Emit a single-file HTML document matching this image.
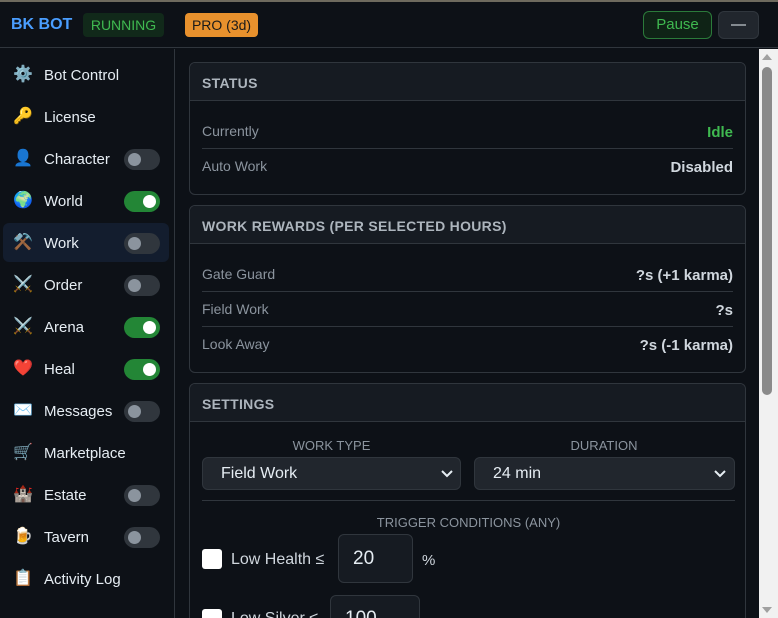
<!DOCTYPE html>
<html style="height:618px;overflow:hidden"><head><style>
*{box-sizing:border-box;margin:0;padding:0}
body{width:778px;height:618px;overflow:hidden;background:#0d1117;font-family:"Liberation Sans",sans-serif;color:#e6edf3;position:relative}
.hdr{position:absolute;left:0;top:0;width:778px;height:48px;border-bottom:1px solid #30363d;background:#0d1117}
.abs{position:absolute}
.side{position:absolute;left:0;top:49px;width:175px;height:569px;border-right:1px solid #30363d}
.nav{position:absolute;left:3px;width:166px;height:39px;border-radius:6px;font-size:15px;color:#e6edf3}
.nav .ic{position:absolute;left:10px;top:10px;width:20px;height:20px;font-size:16px;line-height:20px;text-align:center}
.nav .t{position:absolute;left:41px;top:12px}
.tg{position:absolute;left:121px;top:10px;width:36px;height:21px;border-radius:11px;background:#30363d}
.tg::after{content:"";position:absolute;left:4px;top:4px;width:13px;height:13px;border-radius:50%;background:#8b949e}
.tg.on{background:#238636}.tg.on::after{left:19px;background:#fff}
.card{position:absolute;left:189px;width:557px;border:1px solid #30363d;border-radius:6px;background:#0d1117;overflow:hidden}
.ch{height:38px;background:#161b22;border-bottom:1px solid #30363d;font-size:14px;font-weight:bold;color:#adb5bd;padding:12px 0 0 12px;letter-spacing:.3px}
.row{position:absolute;left:12px;right:12px;height:35px;font-size:14px;color:#8b949e}
.row .l{position:absolute;left:0;top:9px}
.row .r{position:absolute;right:0;top:10px;font-weight:bold;color:#d0d7de;font-size:15px}
.sel{position:absolute;height:33px;background:#21262d;border:1px solid #30363d;border-radius:6px;font-size:16px;color:#e6edf3}
.lbl{position:absolute;font-size:13px;color:#8b949e;text-align:center}
</style></head><body>
<div class="hdr">
<div class="abs" style="left:0;top:0;width:778px;height:2px;background:#6e6a5e"></div>
<div class="abs" style="left:11px;top:16px;font-size:16px;font-weight:bold;color:#4a9eff">BK BOT</div>
<div class="abs" style="left:83px;top:13px;width:81px;height:24px;border-radius:4px;background:#11291a;color:#3fb950;font-size:14px;text-align:center;line-height:24px">RUNNING</div>
<div class="abs" style="left:185px;top:13px;width:73px;height:24px;border-radius:4px;background:#e8912d;color:#1a1a1a;font-size:14px;text-align:center;line-height:24px">PRO (3d)</div>
<div class="abs" style="left:643px;top:11px;width:69px;height:28px;border:1px solid #2b7a3a;border-radius:6px;background:#0f2316;color:#3fb950;font-size:15px;text-align:center;line-height:26px">Pause</div>
<div class="abs" style="left:718px;top:11px;width:41px;height:28px;border:1px solid #30363d;border-radius:6px;background:#21262d;color:#e6edf3;font-size:15px;text-align:center;line-height:26px">—</div>
</div>
<div class="side">
<div class="nav" style="top:6px"><span class="ic">⚙️</span><span class="t">Bot Control</span></div>
<div class="nav" style="top:48px"><span class="ic">🔑</span><span class="t">License</span></div>
<div class="nav" style="top:90px"><span class="ic">👤</span><span class="t">Character</span><span class="tg"></span></div>
<div class="nav" style="top:132px"><span class="ic">🌍</span><span class="t">World</span><span class="tg on"></span></div>
<div class="nav" style="top:174px;background:#131d2e"><span class="ic">⚒️</span><span class="t">Work</span><span class="tg"></span></div>
<div class="nav" style="top:216px"><span class="ic">⚔️</span><span class="t">Order</span><span class="tg"></span></div>
<div class="nav" style="top:258px"><span class="ic">⚔️</span><span class="t">Arena</span><span class="tg on"></span></div>
<div class="nav" style="top:300px"><span class="ic" style="color:#f0506e">❤️</span><span class="t">Heal</span><span class="tg on"></span></div>
<div class="nav" style="top:342px"><span class="ic">✉️</span><span class="t">Messages</span><span class="tg"></span></div>
<div class="nav" style="top:384px"><span class="ic">🛒</span><span class="t">Marketplace</span></div>
<div class="nav" style="top:426px"><span class="ic">🏰</span><span class="t">Estate</span><span class="tg"></span></div>
<div class="nav" style="top:468px"><span class="ic">🍺</span><span class="t">Tavern</span><span class="tg"></span></div>
<div class="nav" style="top:510px"><span class="ic">📋</span><span class="t">Activity Log</span></div>
</div>

<div class="card" style="top:62px;height:133px"><div class="ch">STATUS</div>
<div class="row" style="top:51px;border-bottom:1px solid #30363d"><span class="l">Currently</span><span class="r" style="color:#3fb950">Idle</span></div>
<div class="row" style="top:86px"><span class="l">Auto Work</span><span class="r">Disabled</span></div>
</div>
<div class="card" style="top:205px;height:168px"><div class="ch">WORK REWARDS (PER SELECTED HOURS)</div>
<div class="row" style="top:51px;border-bottom:1px solid #30363d"><span class="l">Gate Guard</span><span class="r">?s (+1 karma)</span></div>
<div class="row" style="top:86px;border-bottom:1px solid #30363d"><span class="l">Field Work</span><span class="r">?s</span></div>
<div class="row" style="top:121px"><span class="l">Look Away</span><span class="r">?s (-1 karma)</span></div>
</div>
<div class="card" style="top:383px;height:235px;border-bottom:none;border-radius:6px 6px 0 0"><div class="ch">SETTINGS</div>
<div class="lbl" style="left:12px;width:259px;top:54px">WORK TYPE</div>
<div class="lbl" style="left:284px;width:260px;top:54px">DURATION</div>
<div class="sel" style="left:12px;top:73px;width:259px"><span class="abs" style="left:18px;top:7px">Field Work</span><svg class="abs" style="left:237px;top:11px" width="14" height="10"><path d="M2 2l5 5 5-5" stroke="#e6edf3" stroke-width="2" fill="none"/></svg></div>
<div class="sel" style="left:284px;top:73px;width:261px"><span class="abs" style="left:18px;top:7px">24 min</span><svg class="abs" style="left:238px;top:11px" width="14" height="10"><path d="M2 2l5 5 5-5" stroke="#e6edf3" stroke-width="2" fill="none"/></svg></div>
<div class="abs" style="left:12px;top:116px;width:533px;height:1px;background:#30363d"></div>
<div class="lbl" style="left:12px;width:533px;top:131px">TRIGGER CONDITIONS (ANY)</div>
<div class="abs" style="left:12px;top:165px;width:20px;height:20px;background:#fff;border-radius:3px"></div>
<div class="abs" style="left:41px;top:167px;font-size:16px;color:#d0d7de">Low Health ≤</div>
<div class="abs" style="left:148px;top:150px;width:75px;height:49px;background:#161b22;border:1px solid #30363d;border-radius:6px;font-size:19px;padding:13px 0 0 14px">20</div>
<div class="abs" style="left:232px;top:168px;font-size:15px;color:#d0d7de">%</div>
<div class="abs" style="left:12px;top:225px;width:20px;height:20px;background:#fff;border-radius:3px"></div>
<div class="abs" style="left:41px;top:226px;font-size:16px;color:#d0d7de">Low Silver ≤</div>
<div class="abs" style="left:140px;top:211px;width:90px;height:49px;background:#161b22;border:1px solid #30363d;border-radius:6px;font-size:19px;padding:12px 0 0 14px">100</div>
</div>

<div class="abs" style="left:759px;top:49px;width:19px;height:569px;background:#f1f1f1"></div>
<div class="abs" style="left:762px;top:67px;width:10px;height:328px;background:#8a8a8a;border-radius:5px"></div>
<svg class="abs" style="left:762px;top:53px" width="10" height="8"><path d="M0 7L5 1 10 7z" fill="#a0a0a0"/></svg>
<svg class="abs" style="left:762px;top:606px" width="10" height="8"><path d="M0 1L5 7 10 1z" fill="#a0a0a0"/></svg>
</body></html>
